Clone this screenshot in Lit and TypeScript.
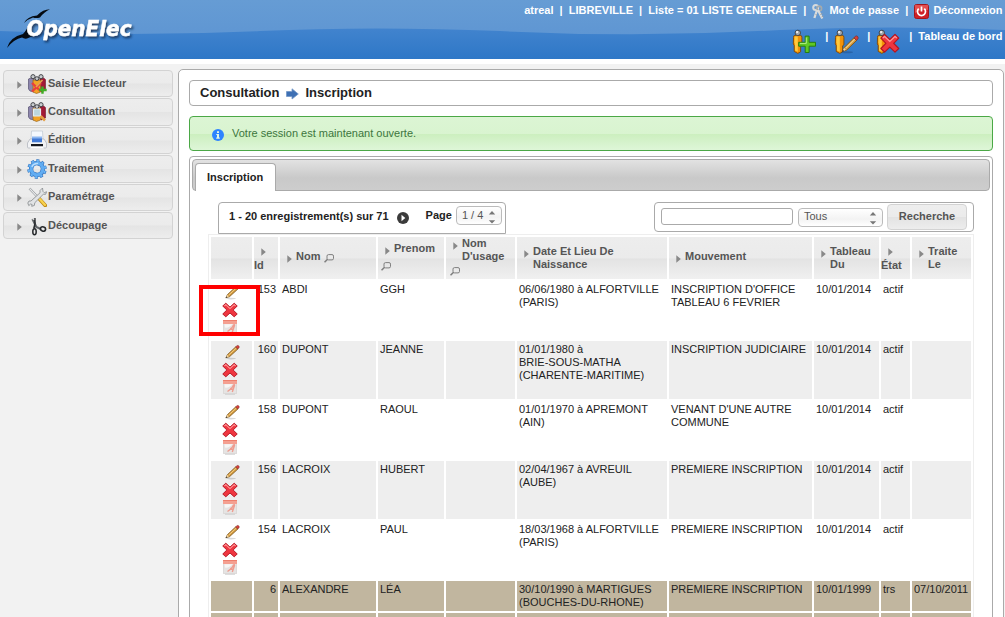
import { LitElement, html, css, svg } from "lit";
import { customElement } from "lit/decorators.js";

const caret = html`<svg class="caret" width="5" height="8" viewBox="0 0 5 8"><path d="M0.3 0.3 4.8 4 0.3 7.7Z" fill="#888" /></svg>`;

const lens = html`<svg class="lens" width="10" height="9" viewBox="0 0 10 9" fill="none" stroke="#7f7f7f">
  <path d="M4.500 .6h3.500q1.500 0 1.500 1.500v2.300q0 1.500-1.500 1.500H4.500Q3 5.900 3 4.400V2.100Q3 .6 4.500 .6Z" /><path d="M3.600 5.300.5 8.300" stroke-width="1.600" /></svg>`;

const pencilShape = svg`
  <path d="M2 14.4 3.200 11.200 11.600 2.800 14 5 5.400 13.400Z" fill="#d39a3c" stroke="#7a5520" stroke-width=".8" />
  <path d="m4.600 11.600 8-7.900" stroke="#f5cf86" stroke-width="1" />
  <path d="m11.600 2.800 1.500-1.400q.8-.6 1.600.1t.5 1.800L14 5Z" fill="#d8403c" stroke="#7c2820" stroke-width=".6" />
  <path d="m1.500 14.800 1.600-3.300 1 .7.500 1.100Z" fill="#f2d3a0" /><path d="m1.300 15 .8-1.900 1.100 1Z" fill="#222" />`;

const crossShape = svg`<path d="M4 1.200 8 5.100 12 1.200 14.900 4 11 8 14.900 12 12 14.800 8 11 4 14.800 1.100 12 5 8 1.100 4Z"
  fill="#ee3640" stroke="#b4141f" stroke-width=".9" stroke-linejoin="round" />
  <path d="M2.600 4 4 2.700 8 6.500 12 2.700 13.400 4" fill="none" stroke="#ff9698" stroke-width="1" />`;

const person = svg`
  <path d="M2.500 8.500Q2.300 6.400 4 6.400h5.300q1.600 0 1.600 1.800v7.600l-1.300 1v6l-2.800 1.600-3.600-2v-6L2.300 15Z" fill="#f39208" stroke="#7d4a08" stroke-width=".9" />
  <path d="M3.600 7.400h3.200v15.300l-2.800-1.200V14.500l-.6-.4Z" fill="#ffc93c" />
  <circle cx="6.800" cy="3.900" r="2.700" fill="#a3a7ab" stroke="#3c3f43" stroke-width=".9" /><circle cx="6.100" cy="3.100" r="1.100" fill="#f3f3f3" />`;

const addPerson = html`<svg width="26" height="26" viewBox="0 0 26 26">${person}
  <path d="M14.200 7.100h3.900v6.200h6.400v3.900h-6.400v6.300h-3.900v-6.300H7.700v-3.900h6.500Z" fill="#5fc725" stroke="#267d10" />
  <path d="M15.300 8.500v5.900H9" stroke="#b3ef84" fill="none" /></svg>`;
const editPerson = html`<svg width="26" height="26" viewBox="0 0 26 26">${person}
  <ellipse cx="14" cy="23.300" rx="6" ry="1" fill="#163b6c" opacity=".35" />
  <g transform="translate(7.400 5.600) scale(1.160)">${pencilShape}</g></svg>`;
const dropPerson = html`<svg width="26" height="26" viewBox="0 0 26 26">${person}
  <g transform="translate(4.400 3.900) scale(1.300)">${crossShape}</g></svg>`;

const keys = html`<svg width="12" height="16" viewBox="0 0 12 16" fill="none">
  <circle cx="3.700" cy="3.600" r="2.500" stroke="#d5dadd" stroke-width="2" /><circle cx="7.300" cy="4.400" r="2.300" stroke="#a5aaac" stroke-width="1.600" />
  <path d="m5 6-2.600 8M6 6l4.300 8.500" stroke="#d8dbdc" stroke-width="2.300" /><path d="m3.600 10.500 1.500.700m3.300-.700 2-1m-.700 3.300 1.800-.800" stroke="#9da0a2" /></svg>`;
const power = html`<svg width="15" height="15" viewBox="0 0 15 15"><rect x=".5" y=".5" width="14" height="14" rx="2" fill="#cf2026" stroke="#a5151c" />
  <path d="M1 1h13v5Q7 5 1 9Z" fill="#ec6262" opacity=".7" /><path d="M4.700 4.700a4 4 0 1 0 5.600 0M7.500 2.500v5" stroke="#fff" stroke-width="1.700" fill="none" /></svg>`;

const crowd = svg`
  <path d="M1.500 5 5 3.500l2 1.500v13l-4-1-1.500-2Z" fill="#8d86ad" stroke="#554f70" stroke-width=".7" />
  <path d="M13 5 16.500 4l1.900 1.500v10.500L14 18Z" fill="#a31936" stroke="#691024" stroke-width=".7" />
  <path d="M6 6h7.500v12l-4 1.500L6 18Z" fill="#f2a326" stroke="#99641a" stroke-width=".7" />
  <g fill="#c9cccf" stroke="#35373b" stroke-width=".9"><circle cx="6" cy="2.700" r="2.100" /><circle cx="14" cy="2.700" r="2.100" /><circle cx="9.900" cy="4.600" r="1.900" /></g>`;

const menuIcons = [
  html`<svg width="20" height="20" viewBox="0 0 20 20">${crowd}
    <path d="m5 9 9 8.500m0-8.500-9 8.500" stroke="#ea3f3d" stroke-width="2.400" /><path d="m9 13 6.500-7" stroke="#e0a552" stroke-width="1.600" />
    <path d="M15.500 12.500v7.300M12 16h7.700" stroke="#42ad25" stroke-width="2.400" /></svg>`,
  html`<svg width="20" height="20" viewBox="0 0 20 20">${crowd}
    <path d="M6.500 7h7v7h-7Z" fill="#b6dcf2" fill-opacity=".9" stroke="#e4eef4" stroke-width="1.200" /><path d="m13.500 14 4.500 4.500" stroke="#e5a044" stroke-width="2.600" /></svg>`,
  html`<svg width="20" height="20" viewBox="0 0 20 20"><path d="M4.500 1h11l.5 8H4Z" fill="#f4f8fd" stroke="#c3cbd6" stroke-width=".8" />
    <path d="M3 9h14l2.500 4v4q0 1-1 1h-17q-1 0-1-1v-4Z" fill="#f1f2f4" stroke="#b4b8bf" stroke-width=".8" />
    <path d="M5 6.800h10v5.500H5Z" fill="#4179d6" /><path d="M5 6.800h10v1.700H5Z" fill="#8cb7f1" /><path d="M4 14h12v2.200H4Z" fill="#171a20" /><path d="M4 17h12l1 1.500H3Z" fill="#fff" /></svg>`,
  html`<svg width="20" height="20" viewBox="0 0 20 20"><g transform="rotate(12 10 10)"><circle cx="10" cy="10" r="8.200" fill="none" stroke="#2769b8" stroke-width="3" stroke-dasharray="2.900 2.252" />
    <circle cx="10" cy="10" r="5.900" fill="none" stroke="#2769b8" stroke-width="4.400" /><circle cx="10" cy="10" r="8.200" fill="none" stroke="#6bb5f5" stroke-width="2" stroke-dasharray="2.200 2.952" stroke-dashoffset="-.35" />
    <circle cx="10" cy="10" r="5.900" fill="none" stroke="#62adf2" stroke-width="3.300" /><path d="M4.500 9q1-4 5.500-4.500" fill="none" stroke="#b9defe" stroke-width="1.500" /></g></svg>`,
  html`<svg width="20" height="20" viewBox="0 0 20 20"><path d="m2.500 1.500 11 11.500" stroke="#85898d" stroke-width="2.200" /><path d="m2.500 1.500 11 11.500" stroke="#e8eaeb" stroke-width="1.100" />
    <path d="m12 11.500 6.300 7" stroke="#bd8915" stroke-width="3.600" stroke-linecap="round" /><path d="m12.300 11.500 5.700 6.500" stroke="#f8d24f" stroke-width="2.300" stroke-linecap="round" />
    <path d="M15.500 1 13 3.500v2.300L4 14H2L.800 16l1 2.700L3.500 17l1.600.500-.400 1.800 2.600-.800.500-2.800 8.500-8.400h2.300l1-2.600-2.300 1-1.300-1.300Z" fill="#e1e3e5" stroke="#85898c" stroke-width=".8" /></svg>`,
  html`<svg width="20" height="20" viewBox="0 0 20 20" fill="none"><path d="m5.500 3 3.800 8 4.500 2" stroke="#606468" stroke-width="2.200" /><path d="m7.800 2 .2 6-1.200 4.500" stroke="#272a2d" stroke-width="1.600" />
    <circle cx="6.500" cy="3" r="1" fill="#ddd" /><ellipse cx="7.500" cy="15.800" rx="1.700" ry="3" stroke="#25282b" stroke-width="1.500" /><ellipse cx="16" cy="13" rx="2.600" ry="2.100" stroke="#25282b" stroke-width="1.600" transform="rotate(20 16 13)" /></svg>`,
];

const rowIcons = html`<div class="acts">
  <svg class="pen" width="18" height="16" viewBox="0 0 18 16"><ellipse cx="7" cy="14.600" rx="5" ry=".8" fill="#000" opacity=".15" /><g transform="translate(.2 .4) scale(.98 .92)">${pencilShape}</g></svg>
  <svg class="del" width="18" height="16" viewBox="0 0 18 16"><g transform="translate(.6 0) scale(1.050 1)">${crossShape}</g></svg>
  <svg class="pdf" width="14" height="15" viewBox="0 0 14 15"><rect x=".4" y=".5" width="13.200" height="13" fill="#e6e4e3" stroke="#dad6d5" stroke-width=".8" />
    <path d="M0 0h14v4H0Z" fill="#f4a091" /><path d="M0 .5h14" stroke="#ee7f6d" /><path d="M1.500 4.300h8.500L6 7q-2 1.200-4 .5Z" fill="#f8f6f5" /><path d="M4.500 11.500Q9.500 8 10.500 5q1-.8 1 .500L9.300 12M7 8.500l3 .8" stroke="#ef9c8f" stroke-width="1.400" fill="none" />
    <path d="M2 14.300h10" stroke="#ccc" stroke-width=".8" /></svg></div>`;

const spin = html`<svg class="spin" width="8" height="14" viewBox="0 0 8 14"><path d="M4 1 7.200 4.500H.8ZM4 13.500 .8 10.300H7.200Z" fill="#777" /></svg>`;

const rows: string[][] = [
  ["153", "ABDI", "GGH", "", "06/06/1980 à ALFORTVILLE\n(PARIS)", "INSCRIPTION D'OFFICE\nTABLEAU 6 FEVRIER", "10/01/2014", "actif", ""],
  ["160", "DUPONT", "JEANNE", "", "01/01/1980 à\nBRIE-SOUS-MATHA\n(CHARENTE-MARITIME)", "INSCRIPTION JUDICIAIRE", "10/01/2014", "actif", ""],
  ["158", "DUPONT", "RAOUL", "", "01/01/1970 à APREMONT\n(AIN)", "VENANT D'UNE AUTRE\nCOMMUNE", "10/01/2014", "actif", ""],
  ["156", "LACROIX", "HUBERT", "", "02/04/1967 à AVREUIL\n(AUBE)", "PREMIERE INSCRIPTION", "10/01/2014", "actif", ""],
  ["154", "LACROIX", "PAUL", "", "18/03/1968 à ALFORTVILLE\n(PARIS)", "PREMIERE INSCRIPTION", "10/01/2014", "actif", ""],
  ["6", "ALEXANDRE", "LÉA", "", "30/10/1990 à MARTIGUES\n(BOUCHES-DU-RHONE)", "PREMIERE INSCRIPTION", "10/01/1999", "trs", "07/10/2011"],
];

@customElement("app-root")
export class AppRoot extends LitElement {
  static styles = css`
    :host { display: block; position: relative; width: 1005px; height: 617px; overflow: hidden; background: #f2f2f2; color: #222;
      font: 11px/13px "Liberation Sans", Arial, sans-serif; }
    * { box-sizing: border-box; }
    svg { display: block; flex: none; }
    header { position: relative; display: flex; justify-content: space-between; height: 59px; color: #fff; font-weight: bold;
      background: linear-gradient(#669cd4, #5a92d2); }
    .wave { position: absolute; inset: 0; }
    .logo { position: relative; padding: 7px 0 0 6px; }
    .brand { font: italic bold 20.500px "DejaVu Sans", sans-serif; }
    .top { position: relative; display: flex; flex-direction: column; align-items: flex-end; padding-right: 2.500px; }
    .line { display: flex; height: 21px; align-items: center; white-space: pre; }
    .line svg { margin-top: 1px; }
    .line .k { margin: 2px 5px 0 0; }
    .line .p { margin-right: 4px; }
    .tools { display: flex; align-items: flex-start; padding-top: 8px; }
    .tools i { font-style: normal; width: 16px; padding: 1px 0 0 8px; }
    .tools i:last-of-type { width: 17px; }
    .tools b { padding-top: 1px; }
    .strip { height: 5px; background: #fff; }
    .body { display: flex; align-items: flex-start; }
    nav { width: 178px; padding: 6px 5px 0 3px; display: flex; flex-direction: column; gap: 1px; }
    .item { display: flex; align-items: center; height: 27.400px; border: 1px solid #d3d3d3; border-radius: 4px; padding-left: 13px;
      font-weight: bold; color: #555; background: linear-gradient(#ededed, #ebebeb 49%, #e4e4e4 51%, #ededed); }
    .item .caret { margin: 2px 5px 0 0; }
    .item span { margin: 0 0 1px 1px; }
    main { width: 826px; height: 600px; margin-top: 5px; background: #fff; border: 1px solid #aaa; border-radius: 5px; padding: 10px; }
    .title { display: flex; align-items: center; width: 804px; height: 26px; border: 1px solid #aaa; border-radius: 4px; padding: 0 10px 1px; font-size: 13px; font-weight: bold; }
    .title svg { margin: 2px 6px 0 7px; }
    .msg { display: flex; align-items: center; width: 804px; height: 35px; margin-top: 10px; border: 1px solid #4ba846; border-radius: 4px; padding-left: 22px; color: #3c763d;
      background: linear-gradient(#dcf5d4, #d9f4d0 50%, #ccefbf 52%, #def6d8); }
    .msg svg { margin: 2px 8px 0 0; }
    .panel { width: 804px; height: 500px; margin-top: 5px; border: 1px solid #aaa; border-radius: 4px; padding: 2px; }
    .tabs { height: 32px; width: 798px; border: 1px solid #aaa; border-radius: 4px; padding: 3px 0 0 2px; background: linear-gradient(#e2e2e2, #c9c9c9 60%, #cdcdcd); }
    .tab { width: 81px; height: 28px; border: 1px solid #aaa; border-bottom: 0; border-radius: 4px 4px 0 0; background: #fff; font-weight: bold; padding: 7px 0 0 11px; }
    .bars { display: flex; justify-content: space-between; align-items: flex-start; height: 43px; padding: 11px 16px 0 26px; }
    .pager { display: flex; width: 288px; height: 32px; border: 1px solid #aaa; border-radius: 4px 4px 0 0; padding: 3px 0 0 10px; font-weight: bold; }
    .pager span { padding-top: 4px; }
    .pager svg.go { margin: 6px 17px 0 8px; }
    .pager span.pg { padding-top: 3px; }
    .sel { display: flex; justify-content: space-between; align-items: center; border: 1px solid #bbb; border-radius: 4px; padding: 0 5px; color: #555; font-weight: normal;
      background: linear-gradient(#fff, #f3f3f3 60%, #fff); }
    .sel.s1 { width: 46px; height: 19px; margin-left: 4px; }
    .sel.s2 { width: 85px; height: 19px; margin: 4px 4px 0 5px; padding-bottom: 2px; }
    .sel .spin { margin-top: 2px; }
    .search { display: flex; width: 320px; height: 30px; border: 1px solid #aaa; border-radius: 4px; padding: 1px 6px; }
    .field { width: 132px; height: 17px; margin-top: 4px; border: 1px solid #aaa; border-radius: 3px; }
    .btn { width: 80px; height: 26px; border: 1px solid #d3d3d3; border-radius: 4px; color: #555; font-weight: bold; text-align: center; padding-top: 5px;
      background: linear-gradient(#eee, #ebebeb 49%, #e3e3e3 51%, #ededed); }
    .table { width: 766px; margin-left: 16px; border: 1px solid #eee; padding: 2px; }
    .row { display: grid; grid-template-columns: 41px 24px 96px 66px 69px 150px 143px 65px 29px 59px; gap: 2px; height: 58px; margin-bottom: 2px; }
    .row > div { padding: 2px 0 0 2px; white-space: pre; }
    .row > div.n { text-align: right; padding-right: 2px; }
    .row.odd > div { background: #eee; }
    .row.tan { height: 30px; }
    .row.tan > div { background: #c1b69f; }
    .row > div:first-child { padding: 0; white-space: normal; }
    .row.head { height: 42px; font-weight: bold; color: #555; }
    .row.head > div { background: linear-gradient(#ededed, #ebebeb 50%, #e3e3e3 52%, #f0f0f0); padding: 0; display: flex; align-items: center; white-space: normal; }
    .row.head > div.w { flex-direction: column; align-items: flex-start; justify-content: flex-start; }
    .row.head > div.p { padding-top: 5px; }
    .row.head > div.m { padding-bottom: 2px; }
    .head .t { display: flex; align-items: center; padding: 0 0 1px 7px; }
    .head .t .caret { margin: 4px 4px 0 0; }
    .head .up { padding-bottom: 0; }
    .head .up .caret { align-self: flex-start; margin-top: 5px; }
    .head .t .lens { margin: 4px 0 0 4px; }
    .head .w > .lens { margin: 6px 0 0 3px; }
    .head .w > .up + .lens { margin: 4px 0 0 4px; }
    .head .w > .caret { margin: 11px 0 3px 7px; }
    .acts { display: flex; flex-direction: column; }
    .acts .pen { margin: 3px 0 0 13px; }
    .acts .del { margin: 2px 0 0 10px; }
    .acts .pdf { margin: 2px 0 0 12px; }
    .mark { position: absolute; left: 199px; top: 285px; width: 61px; height: 51px; border: 4px solid #f00; }
  `;

  render() {
    return html`
      <header>
        <svg class="wave" width="1005" height="59" viewBox="0 0 1005 59">
          <defs><linearGradient id="w" x1="0" y1="0" x2="0" y2="1"><stop stop-color="#4284ce" /><stop offset="1" stop-color="#2e77c7" /></linearGradient></defs>
          <path d="M0 31Q130 37 260 31 375 26 500 31 640 38 780 30 890 25 1005 30V59H0Z" fill="url(#w)" /></svg>
        <div class="logo"><svg width="132" height="44" viewBox="0 0 132 44">
          <defs><filter id="s" x="-10%" y="-30%" width="120%" height="180%"><feDropShadow dx="1.500" dy="2" stdDeviation="1" flood-color="#0d2747" flood-opacity=".8" /></filter></defs>
          <path d="M18 16Q21 9.500 31 8.500 37 2.300 44 2.300 38 5 34 10.500 30 11.500 27 10.500 22 12 18 16ZM1 41Q4 30 17 27 20 24 24 16L27 29 21 31.500Q18 32 16 30.500 8 32 1 41Z" fill="#050b12" />
          <text class="brand" x="20.500" y="29" fill="#fff" stroke="#fff" stroke-width=".4" textLength="105" lengthAdjust="spacingAndGlyphs" filter="url(#s)">OpenElec</text></svg></div>
        <div class="top">
          <div class="line">atreal&nbsp; |&nbsp; LIBREVILLE&nbsp; |&nbsp; Liste = 01 LISTE GENERALE&nbsp; |&nbsp; <span class="k">${keys}</span>Mot de passe&nbsp; |&nbsp; <span class="p">${power}</span>Déconnexion</div>
          <div class="tools">${addPerson}<i>|</i>${editPerson}<i>|</i>${dropPerson}<i>|</i><b>Tableau de bord</b></div>
        </div>
      </header>
      <div class="strip"></div>
      <div class="body">
        <nav>${["Saisie Electeur", "Consultation", "Édition", "Traitement", "Paramétrage", "Découpage"].map((n, i) => html`<div class="item">${caret}${menuIcons[i]}<span>${n}</span></div>`)}</nav>
        <main>
          <div class="title">Consultation<svg width="13" height="12" viewBox="0 0 13 12"><path d="M.5 3.500h5.500V.800L12.300 6 6 11V8.500H.5Z" fill="#3e70b4" stroke="#7398c8" stroke-width=".8" /></svg>Inscription</div>
          <div class="msg"><svg width="12" height="12" viewBox="0 0 12 12"><circle cx="6" cy="6" r="6" fill="#2e83ff" /><path d="M5 2.200h2V4H5ZM4.300 5H7v3.500h.8v1.200H4.200V8.500H5V6.100h-.7Z" fill="#e2f6e5" /></svg>Votre session est maintenant ouverte.</div>
          <div class="panel">
            <div class="tabs"><div class="tab">Inscription</div></div>
            <div class="bars">
              <div class="pager"><span>1 - 20 enregistrement(s) sur 71</span><svg class="go" width="12" height="12" viewBox="0 0 12 12"><circle cx="6" cy="6" r="6" fill="#3b3b3b" /><path d="M4.500 2.800 8.300 6 4.500 9.200Z" fill="#fff" /></svg><span class="pg">Page</span><div class="sel s1">1 / 4 ${spin}</div></div>
              <div class="search"><div class="field"></div><div class="sel s2">Tous ${spin}</div><div class="btn">Recherche</div></div>
            </div>
            <div class="table">
              <div class="row head">
                <div></div>
                <div class="w">${caret}Id</div>
                <div class="m"><div class="t">${caret}Nom${lens}</div></div>
                <div class="w p"><div class="t">${caret}Prenom</div>${lens}</div>
                <div class="w"><div class="t up">${caret}Nom<br />D'usage</div>${lens}</div>
                <div><div class="t up">${caret}Date Et Lieu De<br />Naissance</div></div>
                <div class="m"><div class="t">${caret}Mouvement</div></div>
                <div><div class="t up">${caret}Tableau<br />Du</div></div>
                <div class="w">${caret}État</div>
                <div><div class="t up">${caret}Traite<br />Le</div></div>
              </div>
              ${rows.map((r, i) => html`<div class="row ${i === 5 ? "tan" : i % 2 ? "odd" : ""}"><div>${i < 5 ? rowIcons : ""}</div>${r.map((c, j) => html`<div class="${j ? "" : "n"}">${c}</div>`)}</div>`)}
              <div class="row tan">${Array.from({ length: 10 }, () => html`<div></div>`)}</div>
            </div>
          </div>
        </main>
      </div>
      <div class="mark"></div>`;
  }
}
